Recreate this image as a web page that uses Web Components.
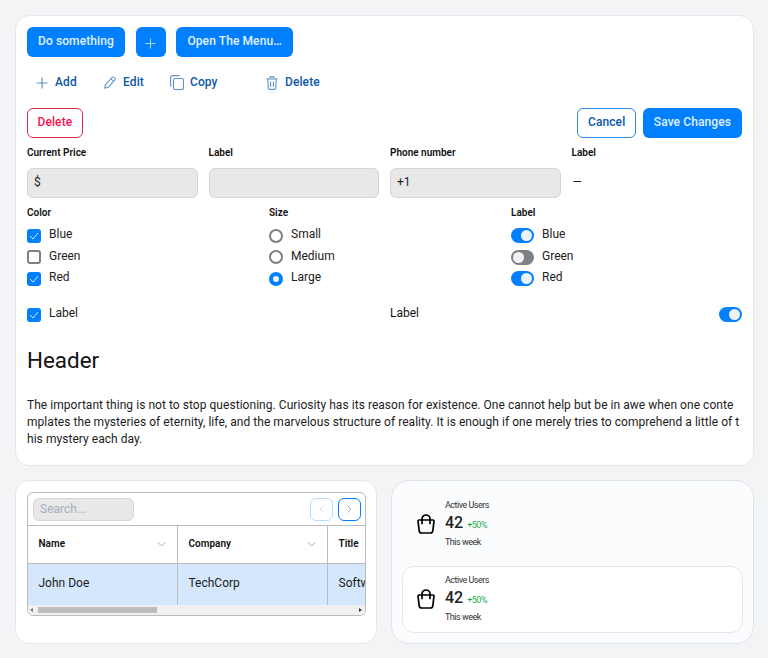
<!DOCTYPE html>
<html>
<head>
<meta charset="utf-8">
<title>Components</title>
<style>
    html, body { margin: 0; padding: 0; background: #f3f4f6; }
    body { font-family: Roboto, "Liberation Sans", sans-serif; font-size: 12px; color: #111; }
    kit-page { width: 768px; height: 658px; }
</style>
</head>
<body>
<kit-page>
    <kit-card>
        <kit-row style="--gap: 10px">
            <kit-button variant="primary">Do something</kit-button>
            <kit-button variant="primary" icon="plus" square style="margin-left:1px"></kit-button>
            <kit-button variant="primary" style="--pad: 10.5px">Open The Menu…</kit-button>
        </kit-row>
        <kit-row style="--gap: 0; margin-top: 10px">
            <kit-button variant="ghost" icon="plus" style="width:68px">Add</kit-button>
            <kit-button variant="ghost" icon="pencil" style="width:66px">Edit</kit-button>
            <kit-button variant="ghost" icon="copy" style="width:96px">Copy</kit-button>
            <kit-button variant="ghost" icon="trash">Delete</kit-button>
        </kit-row>
        <kit-row style="--gap: 7px; margin-top: 11px">
            <kit-button variant="danger" style="--pad: 9.5px">Delete</kit-button>
            <span style="flex:1"></span>
            <kit-button variant="outline" style="--pad: 9.5px">Cancel</kit-button>
            <kit-button variant="primary">Save Changes</kit-button>
        </kit-row>
        <kit-grid cols="4" style="margin-top: 9px">
            <kit-field label="Current Price" value="$"></kit-field>
            <kit-field label="Label"></kit-field>
            <kit-field label="Phone number" value="+1"></kit-field>
            <kit-field label="Label" value="—" plain></kit-field>
        </kit-grid>
        <kit-grid cols="3" style="margin-top: 9px">
            <kit-group label="Color">
                <kit-check checked>Blue</kit-check>
                <kit-check>Green</kit-check>
                <kit-check checked>Red</kit-check>
            </kit-group>
            <kit-group label="Size">
                <kit-radio>Small</kit-radio>
                <kit-radio>Medium</kit-radio>
                <kit-radio checked>Large</kit-radio>
            </kit-group>
            <kit-group label="Label">
                <kit-toggle checked>Blue</kit-toggle>
                <kit-toggle>Green</kit-toggle>
                <kit-toggle checked>Red</kit-toggle>
            </kit-group>
        </kit-grid>
        <kit-grid cols="2" style="margin-top: 14.5px">
            <kit-check checked>Label</kit-check>
            <kit-row style="--gap: 0; justify-content: space-between; align-items: center">
                <span style="margin-top:-2px">Label</span>
                <kit-toggle checked bare></kit-toggle>
            </kit-row>
        </kit-grid>
        <kit-prose heading="Header">The important thing is not to stop questioning. Curiosity has its reason for existence. One cannot help but be in awe when one contemplates the mysteries of eternity, life, and the marvelous structure of reality. It is enough if one merely tries to comprehend a little of this mystery each day.</kit-prose>
    </kit-card>
    <kit-split>
        <kit-card><kit-table></kit-table></kit-card>
        <kit-card tint>
            <kit-stat></kit-stat>
            <kit-stat boxed style="margin-top: 8px"></kit-stat>
        </kit-card>
    </kit-split>
</kit-page>

<script>
const ICONS = {
    plus: '<svg width="12" height="12" viewBox="0 0 12 12"><path d="M6 .5v11M.5 6h11" fill="none" stroke="currentColor" stroke-width="1.2"/></svg>',
    pencil: '<svg width="12" height="13" viewBox="0 0 12 13"><path d="M.8 12.200l.6-3.400L8 1.500a1.300 1.300 0 0 1 1.800-.1l.9.8a1.300 1.300 0 0 1 .1 1.800L4.200 11.300zM6.900 2.800l2.800 2.500" fill="none" stroke="currentColor" stroke-width="1.100" stroke-linejoin="round"/></svg>',
    copy: '<svg width="14" height="15" viewBox="0 0 14 15" style="margin-right:-1px"><rect x="3.500" y="3.500" width="10" height="11" rx="1.800" fill="none" stroke="currentColor" stroke-width="1.100"/><path d="M1.500 11.500A1 1 0 0 1 .6 10.500V2.500A1.800 1.800 0 0 1 2.400.6H9.500" fill="none" stroke="currentColor" stroke-width="1.100"/></svg>',
    trash: '<svg width="12" height="14" viewBox="0 0 12 14"><path d="M.5 3h11M4 3V1.500A1 1 0 0 1 5 .6h2a1 1 0 0 1 1 .9V3M1.700 3l.6 9.300a1.200 1.200 0 0 0 1.200 1.100h5a1.200 1.200 0 0 0 1.200-1.100L10.300 3M4.600 5.500v5.500M7.400 5.500v5.500" fill="none" stroke="currentColor" stroke-width="1.100"/></svg>',
    bag: '<svg width="18" height="20" viewBox="0 0 18 20"><path d="M2 6h14a1 1 0 0 1 1 1.100l-1.200 9.700a2.500 2.500 0 0 1-2.500 2.200H4.700a2.500 2.500 0 0 1-2.500-2.200L1 7.100A1 1 0 0 1 2 6zM5 9.500V5a4 4 0 0 1 8 0v4.500" fill="none" stroke="#000" stroke-width="1.700" stroke-linecap="round" stroke-linejoin="round"/></svg>',
    chevron: '<svg width="9" height="6" viewBox="0 0 9 6"><path d="M.5 1l4 4 4-4" fill="none" stroke="#aaa" stroke-width="1"/></svg>',
    left: '<svg width="5" height="8" viewBox="0 0 5 8"><path d="M4.500 .5L1 4l3.500 3.500" fill="none" stroke="currentColor" stroke-width="1"/></svg>',
    right: '<svg width="5" height="8" viewBox="0 0 5 8"><path d="M.5 .5L4 4 .5 7.500" fill="none" stroke="currentColor" stroke-width="1"/></svg>',
    tick: '<svg width="10" height="8" viewBox="0 0 10 8"><path d="M1 4l3 3 5-6" fill="none" stroke="#dbeafe" stroke-width="1"/></svg>'
};

class Base extends HTMLElement {
    constructor() {
        super();
        this.attachShadow({ mode: 'open' });
    }
    connectedCallback() {
        this.shadowRoot.innerHTML = this.markup();
    }
}

class KitPage extends Base {
    markup() {
        return `<style>
            :host { display: flex; flex-direction: column; gap: 14px; padding: 15px 14px 15px 15px; box-sizing: border-box; }
        </style><slot></slot>`;
    }
}

class KitSplit extends Base {
    markup() {
        return `<style>
            :host { display: grid; grid-template-columns: 362px 363px; gap: 14px; height: 162px; }
        </style><slot></slot>`;
    }
}

class KitCard extends Base {
    markup() {
        return `<style>
            :host { display: block; box-sizing: border-box; background: #fff; border: 1px solid #e5e7eb; border-radius: 14px; padding: 11px; }
            :host([tint]) { background: #fbfcfe; padding: 10px; border-radius: 18px; border-color: #dfe2e6; }
        </style><slot></slot>`;
    }
}

class KitRow extends Base {
    markup() {
        return `<style>
            :host { display: flex; gap: var(--gap, 8px); }
        </style><slot></slot>`;
    }
}

class KitGrid extends Base {
    markup() {
        return `<style>
            :host { display: grid; column-gap: 11px; grid-template-columns: repeat(${this.getAttribute('cols')}, 1fr); }
        </style><slot></slot>`;
    }
}

class KitButton extends Base {
    markup() {
        const icon = this.getAttribute('icon');
        return `<style>
            :host { display: inline-flex; }
            button { all: unset; box-sizing: border-box; display: inline-flex; align-items: center; gap: 7px; height: 30px; padding: 0 var(--pad, 10px) 2px; border-radius: 6px; font: 500 12px/1 Roboto, sans-serif; letter-spacing: .1px; white-space: nowrap; border: 1px solid transparent; }
            :host([variant=primary]) button { background: #0080ff; color: #e3f0ff; }
            :host([variant=primary]) svg { opacity: .75; width: 11px; height: 11px; margin-top: 2px; }
            :host([square]) button { width: 30px; padding: 0; justify-content: center; }
            :host([variant=ghost]) button { color: #0b57ab; padding: 0 8px; }
            :host([variant=ghost]) svg { opacity: .65; margin-top: 1px; }
            :host([variant=danger]) button { color: #f5104f; border-color: #dc2a4a; background: #fff; }
            :host([variant=outline]) button { color: #0b57ab; border-color: #2b8cf0; background: #fff; }
        </style><button part="button">${icon ? ICONS[icon] : ''}<slot></slot></button>`;
    }
}

class KitField extends Base {
    markup() {
        const value = this.getAttribute('value') || '';
        return `<style>
            :host { display: block; }
            label { display: block; height: 12px; font: 600 10px/12px Roboto, sans-serif; color: #111; margin-bottom: 9px; }
            div { box-sizing: border-box; height: 30px; line-height: 27px; padding: 0 6px; background: #e8e8e8; border: 1px solid #d6d6d6; border-radius: 6px; font-size: 12px; color: #222; }
            :host([plain]) div { background: none; border-color: transparent; padding: 0; }
        </style><label>${this.getAttribute('label')}</label><div>${value}</div>`;
    }
}

class KitGroup extends Base {
    markup() {
        return `<style>
            :host { display: block; }
            label { display: block; height: 12px; font: 600 10px/12px Roboto, sans-serif; color: #111; margin-bottom: 5.5px; }
            section { display: grid; grid-auto-rows: 21.5px; }
        </style><label>${this.getAttribute('label')}</label><section><slot></slot></section>`;
    }
}

const choiceCss = `
    :host { display: flex; align-items: center; gap: 8px; height: 21.5px; font-size: 12px; color: #222; }
    :host([bare]) { gap: 0; }
    span { display: block; margin-top: -2px; }
    i { display: flex; flex: none; align-items: center; justify-content: center; box-sizing: border-box; margin-top: 1px; }
`;

class KitCheck extends Base {
    markup() {
        return `<style>${choiceCss}
            i { width: 14px; height: 14px; border-radius: 3px; border: 2px solid #808080; }
            :host([checked]) i { background: #0080ff; border: 0; }
        </style><i>${this.hasAttribute('checked') ? ICONS.tick : ''}</i><span><slot></slot></span>`;
    }
}

class KitRadio extends Base {
    markup() {
        return `<style>${choiceCss}
            i { width: 14px; height: 14px; border-radius: 50%; border: 2px solid #808080; }
            :host([checked]) i { background: #f0f4fa; border: 4px solid #0080ff; }
        </style><i></i><span><slot></slot></span>`;
    }
}

class KitToggle extends Base {
    markup() {
        return `<style>${choiceCss}
            i { width: 23px; height: 15px; border-radius: 8px; background: #808080; justify-content: flex-start; padding: 0 2px; }
            i::after { content: ""; width: 11px; height: 11px; border-radius: 50%; background: #eef1f5; }
            :host([checked]) i { background: #0080ff; justify-content: flex-end; }
        </style><i></i><span><slot></slot></span>`;
    }
}

class KitProse extends Base {
    markup() {
        return `<style>
            :host { display: block; margin-top: 20.5px; }
            h2 { margin: 0; font: 400 22.4px/28px Roboto, sans-serif; color: #111; }
            p { margin: 23px 0 0; font-size: 12px; line-height: 17px; letter-spacing: .045px; color: #1c1c1c; word-break: break-all; padding-bottom: 6px; }
        </style><h2>${this.getAttribute('heading')}</h2><p><slot></slot></p>`;
    }
}

class KitTable extends Base {
    markup() {
        const cols = [['Name', 'John Doe'], ['Company', 'TechCorp'], ['Title', 'Software Engineer']];
        const head = cols.map(c => `<div class="th"><b>${c[0]}</b>${ICONS.chevron}</div>`).join('');
        const row = cols.map(c => `<div class="td">${c[1]}</div>`).join('');
        return `<style>
            :host { display: block; box-sizing: border-box; width: 339px; height: 124px; border: 1px solid #bcbcbc; border-radius: 6px; overflow: hidden; background: #fff; }
            .bar { display: flex; align-items: center; gap: 5px; height: 33px; padding: 1px 4px 0 5px; box-sizing: border-box; border-bottom: 1px solid #bcbcbc; }
            .search { box-sizing: border-box; width: 101px; height: 23px; line-height: 21px; padding: 0 6px; background: #e8e8e8; border: 1px solid #d6d6d6; border-radius: 6px; font-size: 12px; color: #a3aebd; margin-right: auto; }
            .pg { box-sizing: border-box; width: 23px; height: 23px; display: flex; align-items: center; justify-content: center; border-radius: 6px; border: 1px solid #0080ff; color: #a5b4cf; }
            .pg.off { border-color: #b3dcff; color: #d6e2f0; }
            .cols { display: grid; grid-template-columns: repeat(3, 150px); width: 450px; }
            .th { box-sizing: border-box; height: 38px; display: flex; align-items: center; justify-content: space-between; padding: 0 11px 0 10.5px; border-right: 1px solid #bcbcbc; border-bottom: 1px solid #bcbcbc; }
            .th b { font: 600 10px/1 Roboto, sans-serif; color: #111; }
            .td { box-sizing: border-box; height: 41px; line-height: 38px; padding: 0 11px 0 10.5px; background: #d5e7fd; border-right: 1px solid #bcbcbc; font-size: 12px; color: #1c1c1c; white-space: nowrap; }
            .scroll { display: flex; align-items: center; height: 10px; background: #f0f0f0; }
            .arrow { width: 0; height: 0; border: 2px solid transparent; }
            .arrow.l { border-right: 3px solid #777; margin-left: 2px; border-left: 0; }
            .arrow.r { border-left: 3px solid #333; margin-right: 3px; border-right: 0; margin-left: auto; }
            .thumb { width: 119px; height: 6px; margin-left: 5px; background: #bdbdbd; }
        </style>
        <div class="bar">
            <div class="search">Search...</div>
            <div class="pg off">${ICONS.left}</div>
            <div class="pg">${ICONS.right}</div>
        </div>
        <div class="cols">${head}${row}</div>
        <div class="scroll"><i class="arrow l"></i><i class="thumb"></i><i class="arrow r"></i></div>`;
    }
}

class KitStat extends Base {
    markup() {
        return `<style>
            :host { display: flex; align-items: center; gap: 10px; box-sizing: border-box; height: 67px; padding: 0 4px 0 15px; }
            :host([boxed]) { background: #fff; border: 1px solid #e5e7eb; border-radius: 12px; padding-left: 14px; }
            .icon { display: flex; margin-top: 0; }
            .label, .foot { font-size: 9px; letter-spacing: -.5px; line-height: 11px; color: #333; }
            .mid { display: flex; align-items: baseline; gap: 4px; height: 18px; margin: 3.5px 0 5px; line-height: 18px; }
            .num { font-size: 16px; font-weight: 500; color: #222; }
            .pct { font-size: 9px; letter-spacing: -.5px; color: #1fae4b; }
        </style>
        <div class="icon">${ICONS.bag}</div>
        <div>
            <div class="label">Active Users</div>
            <div class="mid"><span class="num">42</span><span class="pct">+50%</span></div>
            <div class="foot">This week</div>
        </div>`;
    }
}

customElements.define('kit-page', KitPage);
customElements.define('kit-split', KitSplit);
customElements.define('kit-card', KitCard);
customElements.define('kit-row', KitRow);
customElements.define('kit-grid', KitGrid);
customElements.define('kit-button', KitButton);
customElements.define('kit-field', KitField);
customElements.define('kit-group', KitGroup);
customElements.define('kit-check', KitCheck);
customElements.define('kit-radio', KitRadio);
customElements.define('kit-toggle', KitToggle);
customElements.define('kit-prose', KitProse);
customElements.define('kit-table', KitTable);
customElements.define('kit-stat', KitStat);
</script>
</body>
</html>
